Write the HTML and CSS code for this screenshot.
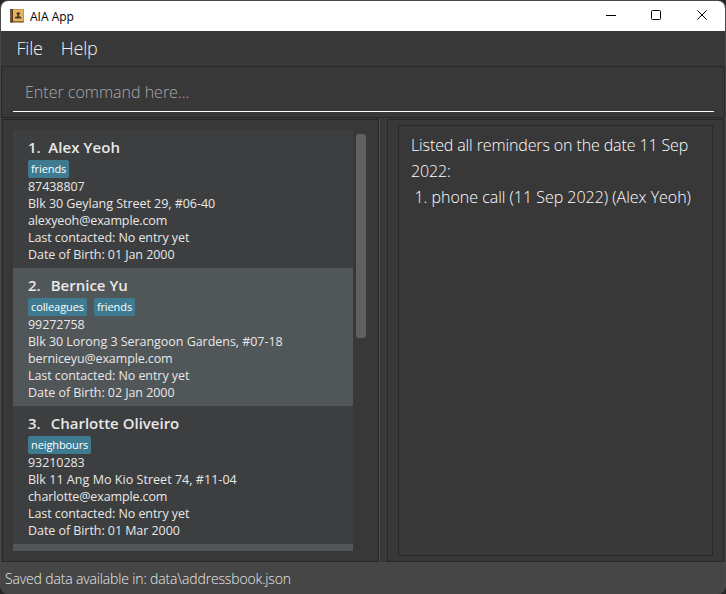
FILE: index.html
```html
<!DOCTYPE html>
<html lang="en">
<head>
<meta charset="utf-8">
<title>AIA App</title>
<link rel="stylesheet" href="styles.css">
</head>
<body>
<div class="window">
  <header class="titlebar">
    <svg class="app-icon" width="14" height="14" viewBox="0 0 14 14">
      <rect width="14" height="13.5" rx="1" fill="#a87532"/>
      <rect x="3" y="0.5" width="10.5" height="11.5" fill="#e6b564"/>
      <rect width="3" height="13.5" rx="1" fill="#513719"/>
      <path d="M1 1v11" stroke="#b7a48a" stroke-width="0.6"/>
      <path d="M3 12.8h11" stroke="#8f6228" stroke-width="1"/>
      <circle cx="8.2" cy="4.6" r="1.7" fill="#503b20"/>
      <path d="M7.4 5.8h1.6v1.4l2.4.7v1.6H5V7.900l2.4-.7z" fill="#503b20"/>
    </svg>
    <span class="title">AIA App</span>
    <svg class="controls" width="104" height="12" viewBox="0 0 104 12" fill="none" stroke="#000">
      <path d="M0 6.500h10"/>
      <rect x="45.500" y="1.500" width="9" height="9" rx="1"/>
      <path d="M91.300 1.300l9.400 9.400M100.700 1.300l-9.400 9.400"/>
    </svg>
  </header>
  <nav class="menubar"><span>File</span><span>Help</span></nav>
  <section class="command"><div class="field"><span>Enter command here...</span></div></section>
  <main class="split">
    <section class="pane list-pane">
      <div class="list">
        <article class="card">
          <h2><span class="num narrow">1.</span><span class="name-wide">Alex Yeoh</span></h2>
          <div class="tags"><span class="tag">friends</span></div>
          <p>87438807</p>
          <p class="address">Blk 30 Geylang Street 29, #06-40</p>
          <p class="email">alexyeoh@example.com</p>
          <p>Last contacted: No entry yet</p>
          <p>Date of Birth: 01 Jan 2000</p>
        </article>
        <article class="card alt">
          <h2><span class="num">2.</span><span>Bernice Yu</span></h2>
          <div class="tags"><span class="tag">colleagues</span><span class="tag">friends</span></div>
          <p>99272758</p>
          <p class="address">Blk 30 Lorong 3 Serangoon Gardens, #07-18</p>
          <p class="email">berniceyu@example.com</p>
          <p>Last contacted: No entry yet</p>
          <p>Date of Birth: 02 Jan 2000</p>
        </article>
        <article class="card">
          <h2><span class="num">3.</span><span>Charlotte Oliveiro</span></h2>
          <div class="tags"><span class="tag">neighbours</span></div>
          <p>93210283</p>
          <p class="address wide">Blk 11 Ang Mo Kio Street 74, #11-04</p>
          <p class="email">charlotte@example.com</p>
          <p>Last contacted: No entry yet</p>
          <p>Date of Birth: 01 Mar 2000</p>
        </article>
        <article class="card alt"></article>
      </div>
      <div class="scrollbar"></div>
    </section>
    <div class="divider"></div>
    <section class="pane result-pane">
      <div class="result">
        <div class="heading">Listed all reminders on the date 11 Sep</div>
        <div class="heading">2022:</div>
        <div class="entry">1. phone call (11 Sep 2022) (Alex Yeoh)</div>
      </div>
    </section>
  </main>
  <footer class="status"><span>Saved data available in: data\addressbook.json</span></footer>
</div>
</body>
</html>
```
FILE: styles.css
```css
* { box-sizing: border-box; }
body {
  margin: 0;
  background: #252525;
  font-family: "Open Sans", "Noto Sans", sans-serif;
}
.window {
  width: 726px;
  height: 594px;
  display: flex;
  flex-direction: column;
  background: #383838;
  border: 1px solid #484848;
  border-bottom: 0;
  border-radius: 8px;
  overflow: hidden;
  white-space: nowrap;
}
.titlebar {
  height: 30px;
  flex: none;
  display: flex;
  align-items: center;
  padding: 0 15px 0 9px;
  background: #fff;
  color: #000;
}
.title { margin-left: 6px; font-size: 12px; letter-spacing: 0; }
.controls { margin: -2px 0 0 auto; }
.menubar {
  height: 35px;
  flex: none;
  padding-left: 15.5px;
  display: flex;
  gap: 18px;
  font-size: 18px;
  font-weight: 300;
  letter-spacing: -0.2px;
  line-height: 35px;
  color: #f0f0f0;
}
.command {
  height: 52px;
  flex: none;
  border: 1px solid #282828;
  padding: 0 10px 0 11px;
}
.field {
  height: 45px;
  border-bottom: 1px solid #fff;
  padding-left: 12px;
  font-size: 16px;
  font-weight: 300;
  line-height: 50px;
  color: #aaa;
}
.split { flex: 1; display: flex; padding: 1px 1px 0; }
.pane { border: 1px solid #282828; height: 443px; }
.list-pane { width: 377px; display: flex; padding: 10px 0 0 10px; }
.list { width: 340px; height: 421px; overflow: hidden; background: #3c3e3f; }
.scrollbar {
  width: 10px;
  height: 204px;
  margin: 4px 0 0 3px;
  border-radius: 3px;
  background: #606060;
}
.divider { width: 8px; border-left: 1px solid #4c4c4c; }
.result-pane { width: 337px; padding: 5px 10px; }
.result {
  height: 431px;
  border: 1px solid #282828;
  padding: 6px 12px;
  font-size: 16px;
  font-weight: 300;
  line-height: 26px;
  color: #fff;
}
.heading { letter-spacing: -0.12px; }
.entry { padding-left: 3.5px; letter-spacing: -0.02px; }
.card { height: 138px; padding: 5px 15px; background: #3c3e3f; color: #e8e8e8; }
.card.alt { background: #515658; }
.card h2 {
  margin: 0;
  height: 25px;
  display: flex;
  font-size: 15px;
  font-weight: 600;
  line-height: 25px;
}
.num { margin-right: 10px; }
.num.narrow { margin-right: 7.5px; }
.name-wide { letter-spacing: 0.1px; }
.tags { display: flex; gap: 7px; height: 18px; }
.tag {
  height: 18px;
  padding: 0 3px;
  border-radius: 2px;
  background: #3e7b91;
  color: #fff;
  font-size: 11px;
  letter-spacing: -0.1px;
  line-height: 17px;
}
.card p {
  margin: 0;
  height: 17px;
  font-size: 12.5px;
  letter-spacing: -0.06px;
  line-height: 17px;
}
.card .address { letter-spacing: -0.04px; }
.card .address.wide { letter-spacing: 0.04px; }
.card .email { letter-spacing: -0.12px; }
.status {
  height: 32px;
  flex: none;
  padding-left: 4px;
  background: #464646;
  color: #e8e8e8;
  font-size: 14px;
  font-weight: 300;
  letter-spacing: -0.15px;
  line-height: 33px;
}
```
